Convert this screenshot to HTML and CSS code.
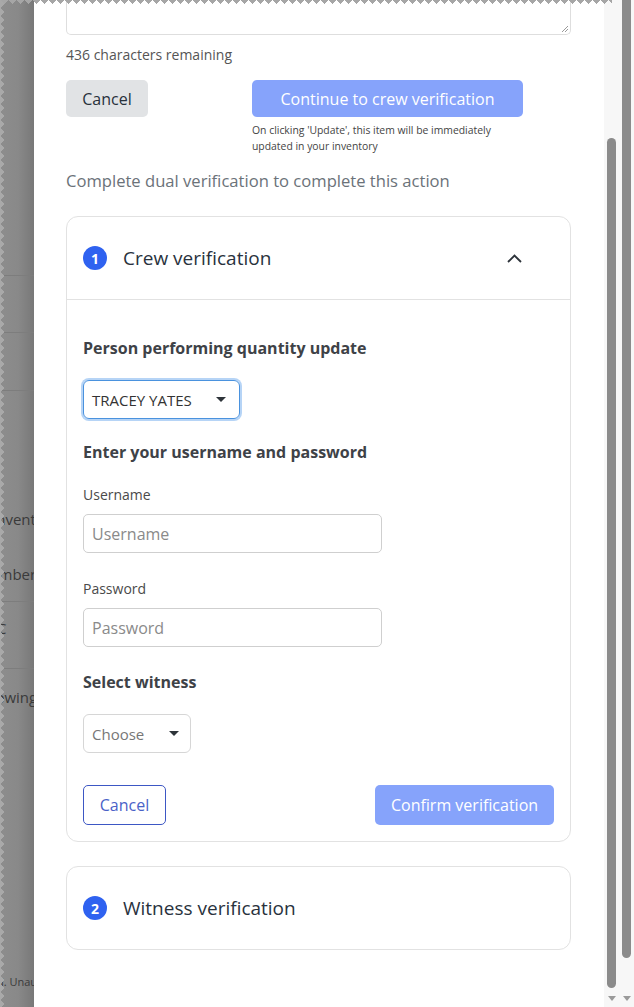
FILE: index.html
```html
<!DOCTYPE html>
<html lang="en">
<head>
<meta charset="utf-8">
<title>Dual verification</title>
<link rel="stylesheet" href="styles.css">
</head>
<body>
<div class="screen">
  <div class="backdrop">
    <div class="bg-row h275 line"></div>
    <div class="bg-row h56 line"></div>
    <div class="bg-row h57 line"></div>
    <div class="bg-row h100"></div>
    <div class="bg-row h56"><span class="bg-text t-inv">Inventory</span></div>
    <div class="bg-row h54 line"><span class="bg-text t-num">Number</span></div>
    <div class="bg-row h52"><span class="bg-text t-c">C</span></div>
    <div class="bg-row h14 line"></div>
    <div class="bg-row h56"><span class="bg-text t-show">Showing</span></div>
    <div class="bg-fill"></div>
    <div class="bg-foot"><span class="bg-small">d. Unauthorized</span></div>
  </div>

  <main class="modal">
    <div class="textarea">
      <svg class="grip" width="8" height="8" viewBox="0 0 8 8"><path d="M7 1 L1 7 M7 4 L4 7" stroke="#9a9a9a" stroke-width="1" fill="none"/></svg>
    </div>
    <p class="remaining">436 characters remaining</p>
    <div class="actions">
      <button class="btn btn-gray">Cancel</button>
      <div class="continue-col">
        <button class="btn btn-primary btn-wide">Continue to crew verification</button>
        <p class="note">On clicking 'Update', this item will be immediately<br>updated in your inventory</p>
      </div>
    </div>
    <p class="intro">Complete dual verification to complete this action</p>

    <section class="card">
      <header class="card-head divided">
        <span class="step">1</span>
        <h2 class="card-title">Crew verification</h2>
        <svg class="chevron" width="15" height="9" viewBox="0 0 15 9"><path d="M1 8 L7.5 1.5 L14 8" stroke="#2d333a" stroke-width="1.8" fill="none"/></svg>
      </header>
      <div class="card-body">
        <h3 class="strong">Person performing quantity update</h3>
        <div class="select focused"><span>TRACEY YATES</span><span class="caret"></span></div>

        <h3 class="strong mt21">Enter your username and password</h3>
        <div class="field-label">Username</div>
        <div class="input">Username</div>
        <div class="field-label mt26">Password</div>
        <div class="input">Password</div>

        <h3 class="strong mt23">Select witness</h3>
        <div class="select choose"><span>Choose</span><span class="caret"></span></div>

        <div class="card-actions">
          <button class="btn btn-outline">Cancel</button>
          <button class="btn btn-primary btn-confirm">Confirm verification</button>
        </div>
      </div>
    </section>

    <section class="card card-2">
      <header class="card-head">
        <span class="step">2</span>
        <h2 class="card-title">Witness verification</h2>
      </header>
    </section>
  </main>

  <div class="gutter">
    <div class="track track-inner">
      <div class="thumb-space"></div>
      <div class="thumb thumb-inner"></div>
      <div class="arrow arrow-inner"></div>
    </div>
    <div class="track track-outer">
      <div class="thumb thumb-outer"></div>
      <div class="arrow arrow-outer"></div>
    </div>
  </div>

  <div class="tear-top"></div>
  <div class="tear-left"></div>
</div>
</body>
</html>
```

FILE: styles.css
```css
html, body {
  margin: 0;
  padding: 0;
}
body {
  font-family: "Open Sans", "Noto Sans", sans-serif;
  background: #8a8a8a;
  overflow: hidden;
}
.screen {
  position: relative;
  display: flex;
  width: 634px;
  height: 1007px;
  overflow: hidden;
}

/* ---------- backdrop (page behind overlay) ---------- */
.backdrop {
  width: 34px;
  flex: none;
  display: flex;
  flex-direction: column;
  overflow: hidden;
  background: linear-gradient(to right, #8d8d8d 0, #898989 18px, #787878 34px);
}
.bg-row {
  flex: none;
  display: flex;
  align-items: center;
  white-space: nowrap;
}
.bg-row.line { border-bottom: 1px solid #7d7d7d; }
.h275 { height: 275px; }
.h56 { height: 56px; }
.h57 { height: 57px; }
.h100 { height: 100px; }
.h54 { height: 54px; }
.h52 { height: 52px; }
.h14 { height: 14px; }
.bg-text {
  font-size: 15px;
  line-height: 20px;
  color: #3a3a3a;
}
.t-inv { margin-left: -8px; }
.t-num { margin-left: -22px; }
.t-c { margin-left: -3px; }
.t-show { margin-left: -22px; }
.bg-fill { flex: 1; }
.bg-foot {
  flex: none;
  white-space: nowrap;
  padding-bottom: 17px;
}
.bg-small {
  display: block;
  margin-left: -3px;
  font-size: 11px;
  line-height: 16px;
  color: #3a3a3a;
}

/* ---------- modal ---------- */
.modal {
  width: 570px;
  flex: none;
  box-sizing: border-box;
  height: 1007px;
  background: #fff;
  padding: 0 33px 0 32px;
  overflow: hidden;
}
.textarea {
  height: 35px;
  box-sizing: border-box;
  border: 1px solid #dedede;
  border-top: none;
  border-radius: 0 0 5px 5px;
  display: flex;
  justify-content: flex-end;
  align-items: flex-end;
  padding: 0 1px 1px 0;
}
.grip { display: block; }
.remaining {
  margin: 10px 0 0;
  font-size: 14px;
  line-height: 20px;
  color: #555;
}
.actions {
  display: flex;
  align-items: flex-start;
  margin-top: 15px;
}
.btn {
  font-family: inherit;
  font-size: 16px;
  border: none;
  padding: 0;
  border-radius: 5px;
  cursor: pointer;
}
.btn-gray {
  width: 82px;
  height: 37px;
  background: #e1e3e5;
  color: #28313b;
}
.continue-col {
  margin-left: 104px;
}
.btn-primary {
  background: #86a3fb;
  color: #fff;
}
.btn-wide {
  width: 271px;
  height: 37px;
}
.note {
  margin: 5px 0 0;
  font-size: 10.4px;
  line-height: 16px;
  color: #444;
}
.intro {
  margin: 15px 0 0;
  font-size: 16.6px;
  line-height: 24px;
  color: #6b7279;
}

/* ---------- cards ---------- */
.card {
  margin-top: 23px;
  border: 1px solid #e2e2e2;
  border-radius: 12px;
}
.card-2 { margin-top: 24px; }
.card-head {
  height: 82px;
  display: flex;
  align-items: center;
  padding: 0 16px;
}
.card-head.divided { border-bottom: 1px solid #e2e2e2; }
.step {
  width: 24px;
  height: 24px;
  flex: none;
  border-radius: 50%;
  background: #2f62f0;
  color: #fff;
  font-size: 14px;
  font-weight: 700;
  display: flex;
  align-items: center;
  justify-content: center;
}
.card-title {
  margin: 0 0 0 16px;
  font-size: 19px;
  font-weight: 400;
  color: #29323d;
}
.chevron {
  margin-left: auto;
  margin-right: 32px;
}
.card-body {
  padding: 36px 16px 16px;
}
.strong {
  margin: 0;
  font-size: 16px;
  font-weight: 700;
  line-height: 24px;
  color: #3e4247;
}
.mt21 { margin-top: 21px; }
.mt23 { margin-top: 23px; }
.mt26 { margin-top: 26px !important; }
.select {
  margin-top: 20px;
  height: 39px;
  box-sizing: border-box;
  display: flex;
  align-items: center;
  justify-content: space-between;
  border-radius: 6px;
}
.select.focused {
  width: 157px;
  border: 1px solid #4a92de;
  box-shadow: 0 0 0 2px #b6d4f6;
  padding: 0 13px 0 8px;
  font-size: 15px;
  color: #333;
}
.select.choose {
  width: 108px;
  border: 1px solid #d6d6d6;
  padding: 0 11px 0 8px;
  font-size: 15px;
  color: #777;
}
.caret {
  width: 0;
  height: 0;
  border-left: 5px solid transparent;
  border-right: 5px solid transparent;
  border-top: 5px solid #2e343a;
}
.field-label {
  margin-top: 21px;
  font-size: 14px;
  line-height: 20px;
  color: #4a4a4a;
}
.input {
  margin-top: 9px;
  width: 299px;
  height: 39px;
  box-sizing: border-box;
  border: 1px solid #cfcfcf;
  border-radius: 5px;
  padding-left: 8px;
  display: flex;
  align-items: center;
  font-size: 16px;
  color: #8a8a8a;
}
.card-actions {
  margin-top: 32px;
  display: flex;
  justify-content: space-between;
  align-items: center;
}
.btn-outline {
  width: 83px;
  height: 40px;
  background: #fff;
  border: 1px solid #3d57c4;
  color: #4a62c8;
}
.btn-confirm {
  width: 179px;
  height: 40px;
}

/* ---------- scrollbars ---------- */
.gutter {
  width: 30px;
  flex: none;
  display: flex;
  background: #f7f7f7;
}
.track {
  display: flex;
  flex-direction: column;
}
.track-inner {
  width: 16px;
  padding-left: 3px;
  box-sizing: border-box;
}
.track-outer {
  width: 14px;
  padding-left: 2px;
  box-sizing: border-box;
}
.thumb-space { height: 138px; flex: none; }
.thumb {
  width: 9px;
  flex: none;
  background: #8b8b8b;
}
.thumb-inner {
  height: 850px;
  border-radius: 5px;
}
.thumb-outer {
  height: 958px;
  border-radius: 0 0 5px 5px;
}
.arrow {
  width: 0;
  height: 0;
  border-left: 4px solid transparent;
  border-right: 4px solid transparent;
  border-top: 5px solid #9a9a9a;
}
.arrow-inner { margin: 8px 0 0 1px; }
.arrow-outer { margin: 38px 0 0 1px; }

/* ---------- torn screenshot edges ---------- */
.tear-top {
  position: absolute;
  top: 0;
  left: 0;
  width: 612px;
  height: 5px;
  background:
    linear-gradient(135deg, #a6a6a6 25%, transparent 25%) -4px 0,
    linear-gradient(225deg, #a6a6a6 25%, transparent 25%) -4px 0;
  background-size: 8px 8px;
}
.tear-left {
  position: absolute;
  top: 0;
  left: 0;
  width: 5px;
  height: 1007px;
  background:
    linear-gradient(45deg, #a9a9a9 25%, transparent 25%) 0 -4px,
    linear-gradient(135deg, #a9a9a9 25%, transparent 25%) 0 -4px;
  background-size: 8px 8px;
}
```
